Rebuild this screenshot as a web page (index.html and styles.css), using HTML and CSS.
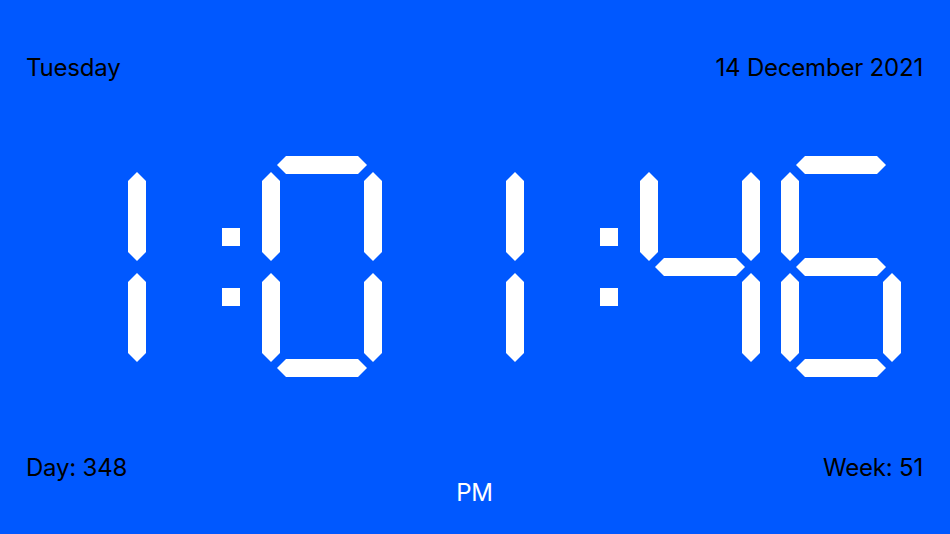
FILE: index.html
```html
<!DOCTYPE html>
<html lang="en">
<head>
<meta charset="utf-8">
<title>Clock</title>
<link rel="stylesheet" href="styles.css">
</head>
<body>
<div class="page">
  <div class="top-row">
    <span class="label">Tuesday</span>
    <span class="label">14 December 2021</span>
  </div>

  <div class="clock">
    <svg class="digit" viewBox="0 0 120 222" aria-label="1">
      <polygon points="111,16 120,25 120,96 111,105 102,96 102,25"/>
      <polygon points="111,117 120,126 120,197 111,206 102,197 102,126"/>
    </svg>
    <svg class="colon" viewBox="0 0 18 222" aria-label=":">
      <rect x="0" y="72" width="18" height="18"/>
      <rect x="0" y="132" width="18" height="18"/>
    </svg>
    <svg class="digit" viewBox="0 0 120 222" aria-label="0">
      <polygon points="15,9 24,0 96,0 105,9 96,18 24,18"/>
      <polygon points="9,16 18,25 18,96 9,105 0,96 0,25"/>
      <polygon points="111,16 120,25 120,96 111,105 102,96 102,25"/>
      <polygon points="9,117 18,126 18,197 9,206 0,197 0,126"/>
      <polygon points="111,117 120,126 120,197 111,206 102,197 102,126"/>
      <polygon points="15,212 24,203 96,203 105,212 96,221 24,221"/>
    </svg>
    <svg class="digit" viewBox="0 0 120 222" aria-label="1">
      <polygon points="111,16 120,25 120,96 111,105 102,96 102,25"/>
      <polygon points="111,117 120,126 120,197 111,206 102,197 102,126"/>
    </svg>
    <svg class="colon" viewBox="0 0 18 222" aria-label=":">
      <rect x="0" y="72" width="18" height="18"/>
      <rect x="0" y="132" width="18" height="18"/>
    </svg>
    <svg class="digit" viewBox="0 0 120 222" aria-label="4">
      <polygon points="9,16 18,25 18,96 9,105 0,96 0,25"/>
      <polygon points="111,16 120,25 120,96 111,105 102,96 102,25"/>
      <polygon points="15,111 24,102 96,102 105,111 96,120 24,120"/>
      <polygon points="111,117 120,126 120,197 111,206 102,197 102,126"/>
    </svg>
    <svg class="digit" viewBox="0 0 120 222" aria-label="6">
      <polygon points="15,9 24,0 96,0 105,9 96,18 24,18"/>
      <polygon points="9,16 18,25 18,96 9,105 0,96 0,25"/>
      <polygon points="15,111 24,102 96,102 105,111 96,120 24,120"/>
      <polygon points="9,117 18,126 18,197 9,206 0,197 0,126"/>
      <polygon points="111,117 120,126 120,197 111,206 102,197 102,126"/>
      <polygon points="15,212 24,203 96,203 105,212 96,221 24,221"/>
    </svg>
  </div>

  <div class="bottom-row">
    <span class="label">Day: 348</span>
    <span class="label ampm">PM</span>
    <span class="label right">Week: 51</span>
  </div>
</div>
</body>
</html>
```

FILE: styles.css
```css
html, body {
  margin: 0;
  padding: 0;
}

body {
  background: #0058ff;
  font-family: Inter, "Liberation Sans", Arial, sans-serif;
}

.page {
  width: 950px;
  height: 534px;
  display: flex;
  flex-direction: column;
  overflow: hidden;
}

.label {
  font-size: 24px;
  line-height: 29px;
  letter-spacing: -0.2px;
  color: #000;
  white-space: nowrap;
}

.top-row {
  display: flex;
  justify-content: space-between;
  padding: 53px 27px 0 26px;
}

.clock {
  display: flex;
  align-items: flex-start;
  margin-top: 74px;
  padding-left: 26px;
}

.digit {
  width: 120px;
  height: 222px;
  fill: #fff;
  flex: none;
}

.digit + .digit {
  margin-left: 21.5px;
}

.colon {
  width: 18px;
  height: 222px;
  fill: #fff;
  flex: none;
  margin-left: 76px;
  margin-right: 22px;
}

.bottom-row {
  display: grid;
  grid-template-columns: 1fr auto 1fr;
  align-items: start;
  padding: 75px 27px 0 26px;
}

.ampm {
  color: #fff;
  margin-top: 25px;
}

.right {
  justify-self: end;
}
```
